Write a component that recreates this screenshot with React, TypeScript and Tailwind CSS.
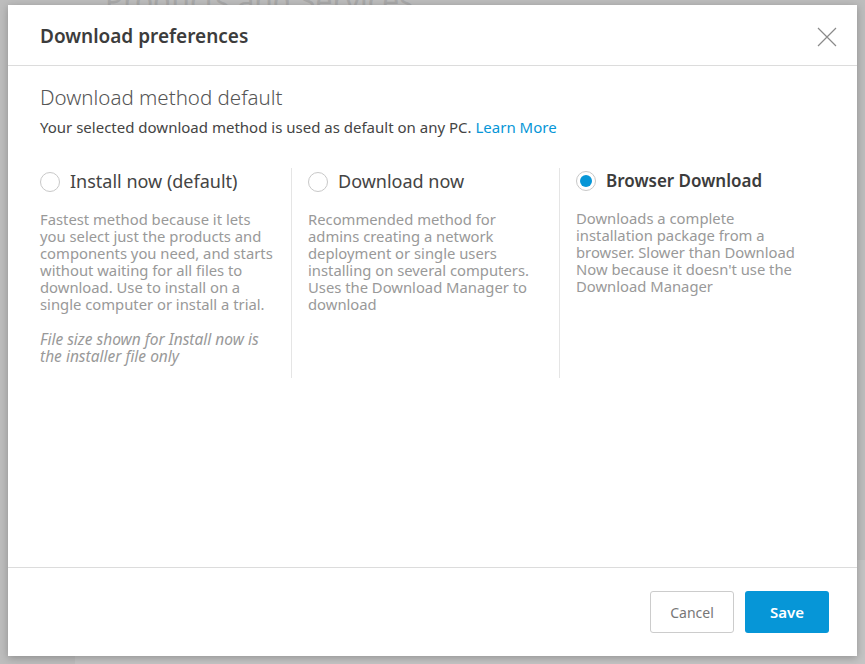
import React, { useState } from 'react';

type Method = {
  id: string;
  label: string;
  text: string;
  note?: string;
};

const methods: Method[] = [
  {
    id: 'install',
    label: 'Install now (default)',
    text: 'Fastest method because it lets you select just the products and components you need, and starts without waiting for all files to download. Use to install on a single computer or install a trial.',
    note: 'File size shown for Install now is the installer file only',
  },
  {
    id: 'download',
    label: 'Download now',
    text: 'Recommended method for admins creating a network deployment or single users installing on several computers. Uses the Download Manager to download',
  },
  {
    id: 'browser',
    label: 'Browser Download',
    text: "Downloads a complete installation package from a browser. Slower than Download Now because it doesn't use the Download Manager",
  },
];

const font = { fontFamily: '"Noto Sans", "Open Sans", sans-serif' };

const Radio = ({ checked }: { checked: boolean }) => (
  <span className="flex h-5 w-5 shrink-0 items-center justify-center rounded-full border border-[#c8c8c8] bg-white">
    {checked && <span className="h-3 w-3 rounded-full bg-[#0696d7]" />}
  </span>
);

export default function App() {
  const [selected, setSelected] = useState('browser');

  return (
    <div className="relative h-[664px] w-[865px] overflow-hidden bg-[#bdbdbd]" style={font}>
      <div className="absolute left-[105px] top-[-22px] text-[30px] text-[#a9a9a9]">Products and Services</div>
      <div className="absolute left-[75px] top-[560px] h-[110px] w-[800px] bg-[#c4c4c4]" />

      <div className="absolute left-[8px] top-[5px] flex h-[651px] w-[849px] flex-col bg-white shadow-[0_2px_8px_rgba(0,0,0,0.25)]">
        <div className="flex h-[61px] shrink-0 items-center justify-between border-b border-[#dcdcdc] pl-8 pr-[14px] pt-[3px]">
          <h2 className="text-[19px] font-semibold text-[#3c3c3c]">Download preferences</h2>
          <button className="flex h-8 w-8 items-center justify-center text-[#8a8a8a]">
            <svg width="20" height="20" viewBox="0 0 20 20" fill="none" stroke="currentColor" strokeWidth="1.2">
              <path d="M1 1L19 19M19 1L1 19" />
            </svg>
          </button>
        </div>

        <div className="flex-1 px-8 pt-[19px]">
          <h3 className="text-[20.5px] font-light leading-6 text-[#555]">Download method default</h3>
          <p className="mt-[8px] text-[15px] leading-5 text-[#444]">
            Your selected download method is used as default on any PC.{' '}
            <a className="text-[#0696d7]" href="#">Learn More</a>
          </p>

          <div className="mt-[31px] flex">
            {methods.map((m, i) => (
              <div
                key={m.id}
                className={
                  i === 0
                    ? 'w-[252px] border-r border-[#e5e5e5] pr-4 pb-[13px]'
                    : i === 1
                    ? 'w-[268px] border-r border-[#e5e5e5] px-4 pb-[13px]'
                    : 'flex-1 px-4 pb-[13px]'
                }
              >
                <label className="flex cursor-pointer items-center gap-[10px]" onClick={() => setSelected(m.id)}>
                  <Radio checked={selected === m.id} />
                  <span
                    className={
                      selected === m.id
                        ? 'text-[17px] font-semibold text-[#3c3c3c]'
                        : 'text-[18px] text-[#444]'
                    }
                  >
                    {m.label}
                  </span>
                </label>
                <p className="mt-[16px] text-[14.8px] leading-[17px] text-[#999]">{m.text}</p>
                {m.note && <p className="mt-[18px] text-[15.5px] italic leading-[17px] text-[#999]">{m.note}</p>}
              </div>
            ))}
          </div>
        </div>

        <div className="flex h-[89px] shrink-0 items-center justify-end gap-[11px] border-t border-[#dcdcdc] pr-[28px]">
          <button className="h-[42px] w-[84px] rounded-[3px] border border-[#cccccc] text-[14px] text-[#777]">Cancel</button>
          <button className="h-[42px] w-[84px] rounded-[3px] bg-[#0696d7] text-[15px] font-semibold text-white">Save</button>
        </div>
      </div>
    </div>
  );
}
